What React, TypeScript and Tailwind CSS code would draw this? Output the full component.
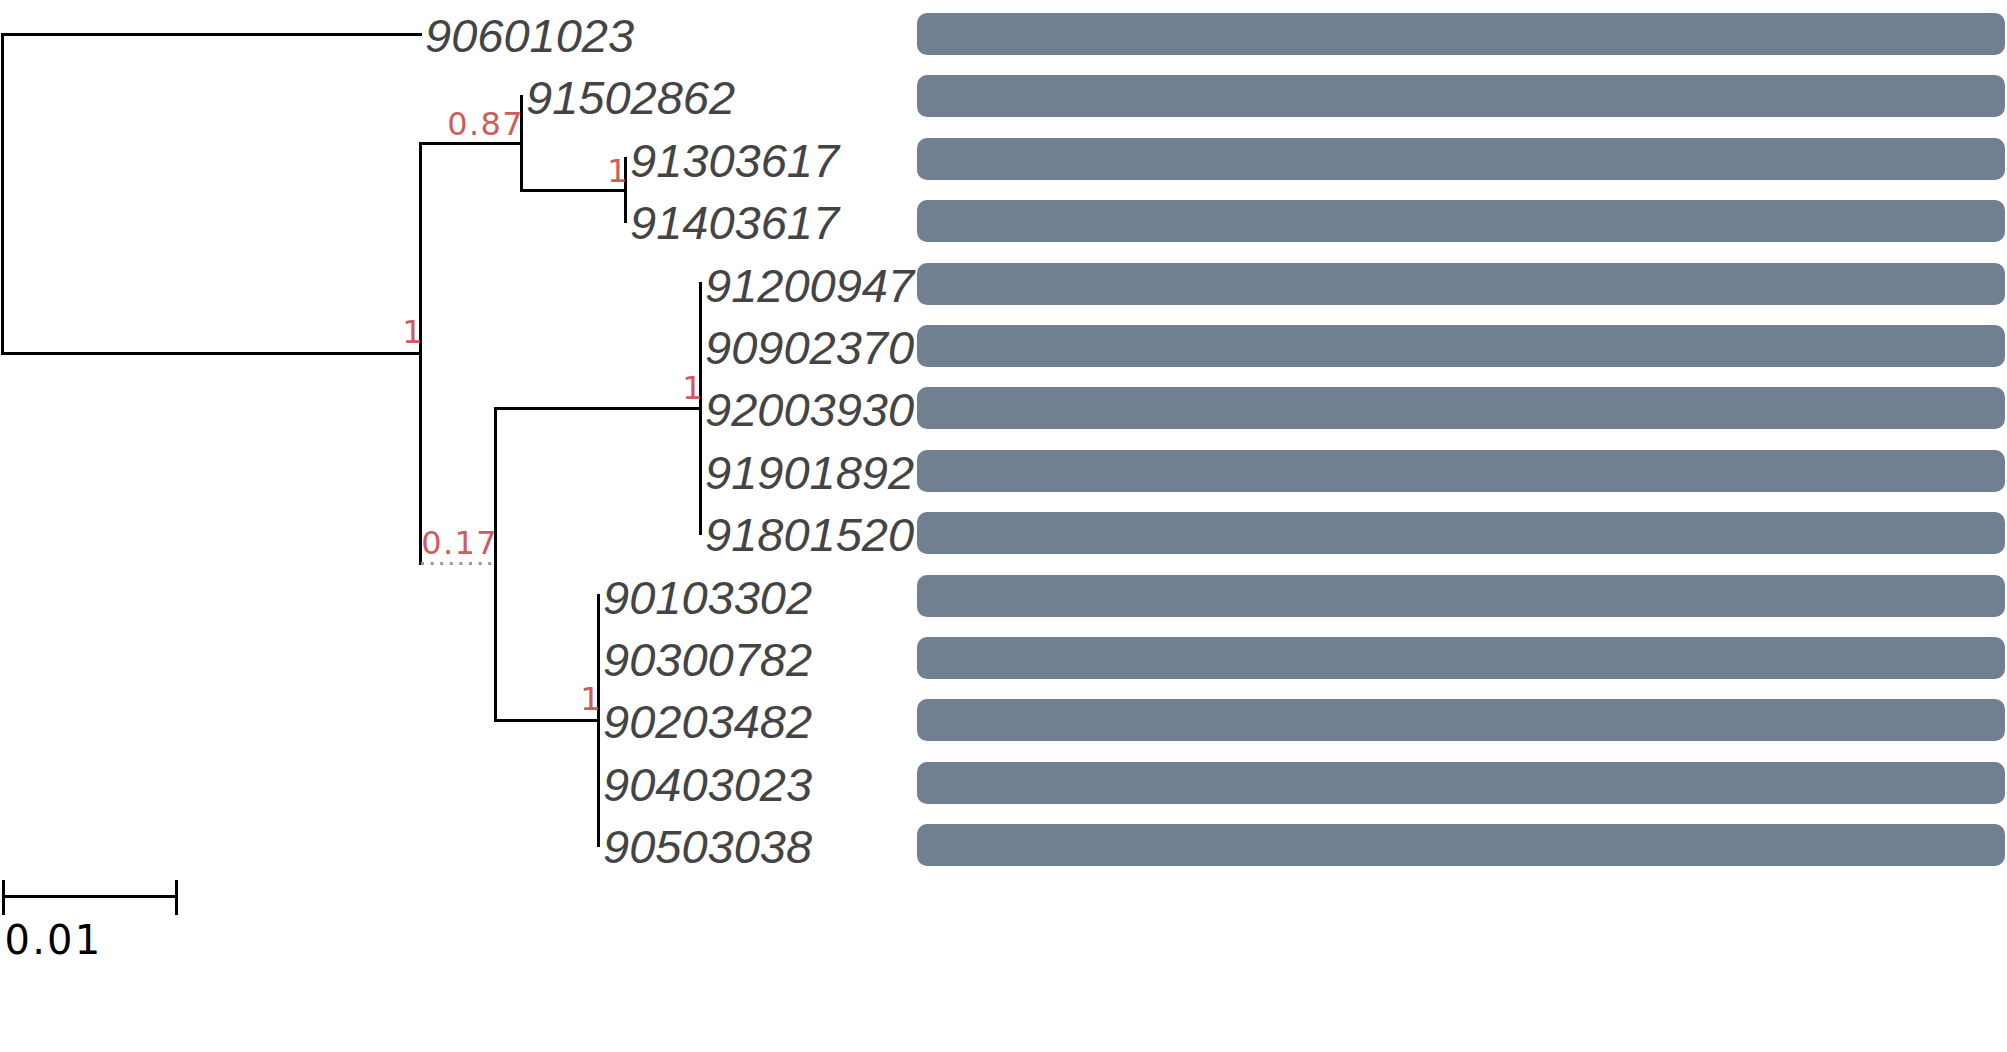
import React from 'react';

const ROW = 62.4;
const rowY = (i: number) => 34 + ROW * i;
// snap to pixel centres so 3px lines stay crisp
const px = (v: number) => Math.floor(v) + 0.5;

const leaves: { name: string; x: number }[] = [
  { name: '90601023', x: 425 },
  { name: '91502862', x: 526 },
  { name: '91303617', x: 630 },
  { name: '91403617', x: 630 },
  { name: '91200947', x: 705 },
  { name: '90902370', x: 705 },
  { name: '92003930', x: 705 },
  { name: '91901892', x: 705 },
  { name: '91801520', x: 705 },
  { name: '90103302', x: 603 },
  { name: '90300782', x: 603 },
  { name: '90203482', x: 603 },
  { name: '90403023', x: 603 },
  { name: '90503038', x: 603 },
];

// node support values, anchored at the right end of the branch
const supports: { label: string; x: number; y: number }[] = [
  { label: '0.87', x: 524, y: 135 },
  { label: '1', x: 629, y: 182 },
  { label: '1', x: 424, y: 343 },
  { label: '1', x: 704, y: 399 },
  { label: '0.17', x: 498, y: 554 },
  { label: '1', x: 602, y: 710 },
];

// solid branches [x1, y1, x2, y2]
const branches: [number, number, number, number][] = [
  [2, rowY(0), 2, 353],
  [2, rowY(0), 420, rowY(0)],
  [2, 353, 420, 353],
  [420, 143, 420, 563],
  [420, 143, 521, 143],
  [521, rowY(1), 521, 190],
  [521, 190, 625, 190],
  [625, rowY(2), 625, rowY(3)],
  [495, rowY(6), 495, rowY(11)],
  [495, rowY(6), 700, rowY(6)],
  [700, rowY(4), 700, rowY(8)],
  [495, rowY(11), 598, rowY(11)],
  [598, rowY(9), 598, rowY(13)],
];

function Tree() {
  return (
    <svg width={917} height={880} className="shrink-0">
      {branches.map(([x1, y1, x2, y2], i) => (
        <line
          key={i}
          x1={px(x1)}
          y1={px(y1)}
          x2={px(x2)}
          y2={px(y2)}
          stroke="#000"
          strokeWidth={3}
          strokeLinecap="square"
        />
      ))}
      <line x1={421} y1={563.5} x2={492} y2={563.5} stroke="#999" strokeWidth={3} strokeDasharray="3 6.6" />
      {leaves.map((l, i) => (
        <text
          key={l.name}
          x={l.x}
          y={rowY(i) + 18}
          fill="#444"
          fontSize={47}
          fontStyle="italic"
          fontFamily="'Liberation Sans', Arial, sans-serif"
        >
          {l.name}
        </text>
      ))}
      {supports.map((s, i) => (
        <text
          key={i}
          x={s.x}
          y={s.y}
          fill="#cd5c5c"
          fontSize={32}
          letterSpacing={1.4}
          textAnchor="end"
          fontFamily="'DejaVu Sans', sans-serif"
        >
          {s.label}
        </text>
      ))}
    </svg>
  );
}

export default function App() {
  return (
    <div className="w-[2007px] h-[1052px] bg-white overflow-hidden">
      <div className="flex">
        <Tree />
        <div className="flex flex-col gap-[20.4px] pt-[13px] w-[1088px]">
          {leaves.map((l) => (
            <div key={l.name} className="h-[42px] rounded-[10px] bg-[#708090]" />
          ))}
        </div>
      </div>
      <svg width={200} height={90}>
        <line x1={3} y1={16.5} x2={176} y2={16.5} stroke="#000" strokeWidth={3} />
        <line x1={3.5} y1={-2} x2={3.5} y2={35} stroke="#000" strokeWidth={3} />
        <line x1={176.5} y1={-2} x2={176.5} y2={35} stroke="#000" strokeWidth={3} />
        <text x={4.5} y={74} fill="#000" fontSize={40} letterSpacing={2.2} fontFamily="'DejaVu Sans', sans-serif">
          0.01
        </text>
      </svg>
    </div>
  );
}
